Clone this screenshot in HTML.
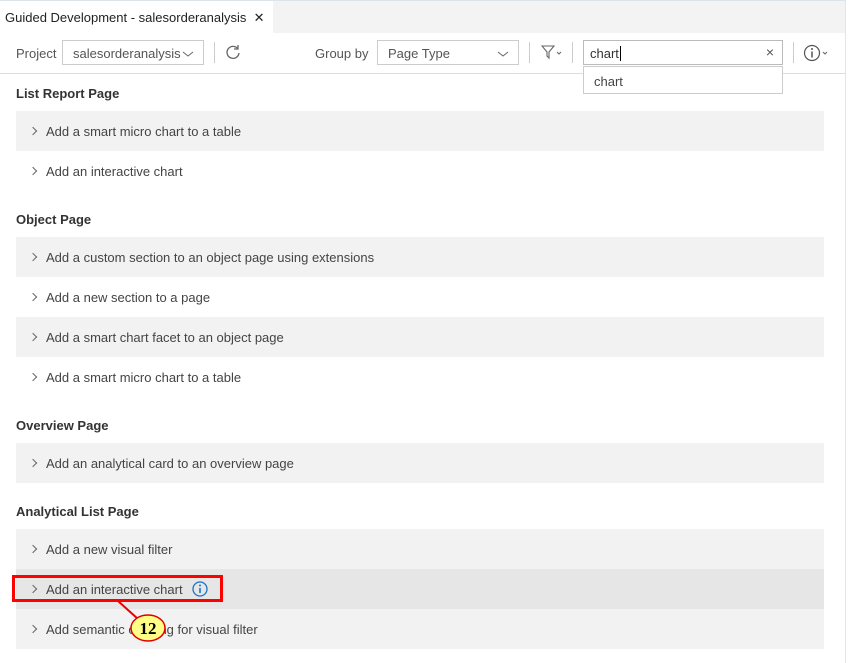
<!DOCTYPE html>
<html><head><style>
*{box-sizing:border-box;margin:0;padding:0}
body{width:851px;height:663px;background:#fff;font-family:"Liberation Sans",sans-serif;font-size:13px;color:#333;position:relative;overflow:hidden}
.tabbar{position:absolute;left:0;top:0;width:845px;height:33px;background:#f3f3f3;border-top:1px solid #dde3ea}
.tab{position:absolute;left:0;top:0;width:273px;height:33px;background:#fff;font-size:13px;color:#222;padding:9px 0 0 5px}
.rb{position:absolute;left:845px;top:0;width:1px;height:663px;background:#e5e5e5}
.tb{position:absolute;left:0;top:33px;width:845px;height:41px;border-bottom:1px solid #ddd}
.lbl{position:absolute;top:13px;color:#555}
.sel{position:absolute;top:7px;height:25px;border:1px solid #ccc;padding:5px 0 0 10px;color:#555}
.sel svg{position:absolute;right:9px;top:9px}
.sep{position:absolute;top:9px;width:1px;height:21px;background:#ccc}
h3{position:absolute;left:16px;font-size:13px;font-weight:bold;color:#333}
.row{position:absolute;left:16px;width:808px;height:40px;padding:13px 0 0 30px;color:#444}
.row.g{background:#f2f2f2}
.row.h{background:#e6e6e6}
.row:before{content:"";position:absolute;left:14px;top:17px;width:5px;height:5px;border-right:1px solid #666;border-top:1px solid #666;transform:rotate(45deg)}
</style></head><body>
<div class="tabbar"><div class="tab">Guided Development - salesorderanalysis &nbsp;<span style="font-size:13px">✕</span></div></div>
<div class="rb"></div>
<div class="tb">
<span class="lbl" style="left:16px">Project</span>
<div class="sel" style="left:62px;width:142px">salesorderanalysis <svg width="12" height="8" viewBox="0 0 12 8"><path d="M1 2l5 4 5-4" fill="none" stroke="#666"/></svg></div>
<div class="sep" style="left:214px"></div>
<svg style="position:absolute;left:225px;top:11px" width="16" height="16" viewBox="0 0 16 16"><path d="M13 5A6 6 0 1 0 14 9" fill="none" stroke="#666" stroke-width="1.3"/><path d="M13 1v4h-4" fill="none" stroke="#666" stroke-width="1.3"/></svg>
<span class="lbl" style="left:315px">Group by</span>
<div class="sel" style="left:377px;width:142px">Page Type <svg width="12" height="8" viewBox="0 0 12 8"><path d="M1 2l5 4 5-4" fill="none" stroke="#666"/></svg></div>
<div class="sep" style="left:529px"></div>
<svg style="position:absolute;left:541px;top:12px" width="24" height="16" viewBox="0 0 24 16"><path d="M1 1h12l-5 6v6l-2-2V7z" fill="none" stroke="#666" stroke-width="1.1"/><path d="M16 7l2 2 2-2" fill="none" stroke="#666"/></svg>
<div class="sep" style="left:572px"></div>
<div class="sel" style="left:583px;width:200px;border-color:#bbb;padding-left:6px;color:#333">chart<span style="border-left:1px solid #000;margin-left:1px"></span><span style="position:absolute;right:8px;top:3px;font-size:14px;color:#555">×</span></div>
<div class="sep" style="left:793px"></div>
<svg style="position:absolute;left:803px;top:11px" width="28" height="18" viewBox="0 0 28 18"><circle cx="9" cy="9" r="7.5" fill="none" stroke="#555" stroke-width="1.2"/><circle cx="9" cy="5" r="1" fill="#555"/><path d="M9 7.5v6" stroke="#555" stroke-width="1.5"/><path d="M20 8l2 2 2-2" fill="none" stroke="#666"/></svg>
</div>
<div style="position:absolute;left:583px;top:66px;width:200px;height:28px;border:1px solid #ccc;background:#fff;padding:7px 0 0 10px;color:#444;z-index:3">chart</div>
<h3 style="top:86px">List Report Page</h3>
<div class="row g" style="top:111px">Add a smart micro chart to a table</div>
<div class="row" style="top:151px">Add an interactive chart</div>
<h3 style="top:212px">Object Page</h3>
<div class="row g" style="top:237px">Add a custom section to an object page using extensions</div>
<div class="row" style="top:277px">Add a new section to a page</div>
<div class="row g" style="top:317px">Add a smart chart facet to an object page</div>
<div class="row" style="top:357px">Add a smart micro chart to a table</div>
<h3 style="top:418px">Overview Page</h3>
<div class="row g" style="top:443px">Add an analytical card to an overview page</div>
<h3 style="top:504px">Analytical List Page</h3>
<div class="row g" style="top:529px">Add a new visual filter</div>
<div class="row h" style="top:569px">Add an interactive chart <svg style="position:absolute;left:176px;top:12px" width="16" height="16" viewBox="0 0 16 16"><circle cx="8" cy="8" r="7" fill="none" stroke="#1a73c8" stroke-width="1.3"/><circle cx="8" cy="4.5" r="1" fill="#1a73c8"/><path d="M8 7v5" stroke="#1a73c8" stroke-width="1.6"/></svg></div>
<div class="row g" style="top:609px">Add semantic coloring for visual filter</div>
<div style="position:absolute;left:12px;top:575px;width:211px;height:27px;border:3px solid #f00"></div>
<svg style="position:absolute;left:0;top:0" width="851" height="663"><line x1="118" y1="601" x2="138" y2="619" stroke="#e00" stroke-width="2"/><ellipse cx="148" cy="628" rx="17" ry="13" fill="#ffff88" stroke="#d00" stroke-width="1.5"/><text x="148" y="634" text-anchor="middle" font-family="Liberation Serif,serif" font-weight="bold" font-size="17" fill="#000">12</text></svg>
</body></html>
